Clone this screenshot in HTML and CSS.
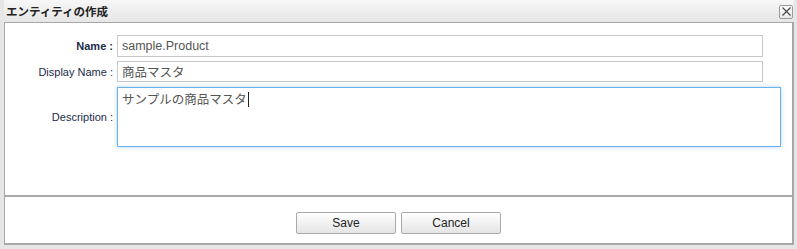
FILE: index.html
```html
<!DOCTYPE html>
<html lang="ja">
<head>
    <meta charset="UTF-8">
    <meta name="viewport" content="width=device-width, initial-scale=1.0">
    <title>エンティティの作成</title>
    <link rel="stylesheet" href="styles.css">
</head>
<body>
    <div class="dialog">
        <div class="titlebar">
            <span class="title">エンティティの作成</span>
            <span class="close" title="Close">
                <svg width="9" height="9" viewBox="0 0 9 9">
                    <path d="M0.5 0.5 L8.5 8.5 M8.5 0.5 L0.5 8.5" stroke="#444" stroke-width="1.1" fill="none"/>
                </svg>
            </span>
        </div>

        <div class="panel">
            <form class="form">
                <label class="label bold" for="name">Name :</label>
                <input class="field" id="name" type="text" value="sample.Product">

                <label class="label" for="dispName">Display Name :</label>
                <input class="field" id="dispName" type="text" value="商品マスタ">

                <label class="label desc" for="desc">Description :</label>
                <div class="area focused" id="desc">サンプルの商品マスタ<span class="caret"></span></div>
            </form>

            <div class="buttons">
                <button class="btn" type="button">Save</button>
                <button class="btn" type="button">Cancel</button>
            </div>
        </div>
    </div>
</body>
</html>
```

FILE: styles.css
```css
/* Page */
body {
    margin: 0;
    padding: 0;
    background-color: #e6e6e6;
    font-family: "Liberation Sans", Arial, "Noto Sans CJK JP", sans-serif;
    font-size: 12px;
    color: #333;
}

/* Dialog frame */
.dialog {
    width: 797px;
    height: 249px;
    box-sizing: border-box;
    padding: 0 3px 4px 4px;
}

.titlebar {
    height: 22px;
    display: flex;
    align-items: center;
    justify-content: space-between;
    padding: 0 1px 0 2px;
    background: linear-gradient(#f7f7f7, #e6e6e6);
}

.title {
    font-weight: bold;
    font-size: 11.5px;
    color: #222;
    margin-top: -1px;
}

.close {
    width: 12px;
    height: 12px;
    border: 1px solid #999;
    border-radius: 2px;
    background: linear-gradient(#fdfdfd, #e9e9e9);
    display: flex;
    align-items: center;
    justify-content: center;
    margin-top: 1px;
}

/* White content panel */
.panel {
    background-color: #fff;
    border: 1px solid #a8a8a8;
    border-width: 1px 2px 2px 1px;
    height: 223px;
    box-sizing: border-box;
    display: flex;
    flex-direction: column;
}

.form {
    display: grid;
    grid-template-columns: 108px 1fr;
    column-gap: 4px;
    row-gap: 4px;
    align-items: center;
    padding: 12px 0 0 0;
    height: 174px;
    box-sizing: border-box;
    border-bottom: 2px solid #a8a8a8;
    align-content: start;
}

.label {
    text-align: right;
    color: #1d2b4a;
    font-size: 11px;
}

.bold {
    font-weight: bold;
}

.field {
    width: 646px;
    height: 22px;
    box-sizing: border-box;
    border: 1px solid #c8c8c8;
    padding: 0 4px;
    font-family: "Liberation Sans", Arial, "Noto Sans CJK JP", sans-serif;
    font-size: 12.5px;
    color: #555;
    outline: none;
}

#dispName {
    height: 21px;
}

.area {
    width: 664px;
    height: 60px;
    box-sizing: border-box;
    border: 1px solid #6cb2ea;
    box-shadow: 0 0 4px rgba(100, 170, 235, 0.5);
    padding: 4px 4px;
    font-size: 12.5px;
    line-height: 16px;
    color: #555;
    margin-top: 1px;
}

.caret {
    display: inline-block;
    width: 1px;
    height: 15px;
    background-color: #222;
    vertical-align: -3px;
    margin-left: 1px;
}

/* Footer buttons */
.buttons {
    flex: 1;
    display: flex;
    justify-content: center;
    gap: 5px;
    padding-top: 15px;
    box-sizing: border-box;
}

.btn {
    width: 100px;
    height: 22px;
    border: 1px solid #aaa;
    border-radius: 2px;
    background: linear-gradient(#ffffff, #e4e4e4);
    font-family: "Liberation Sans", Arial, sans-serif;
    font-size: 12px;
    color: #222;
    padding: 0;
}
```
